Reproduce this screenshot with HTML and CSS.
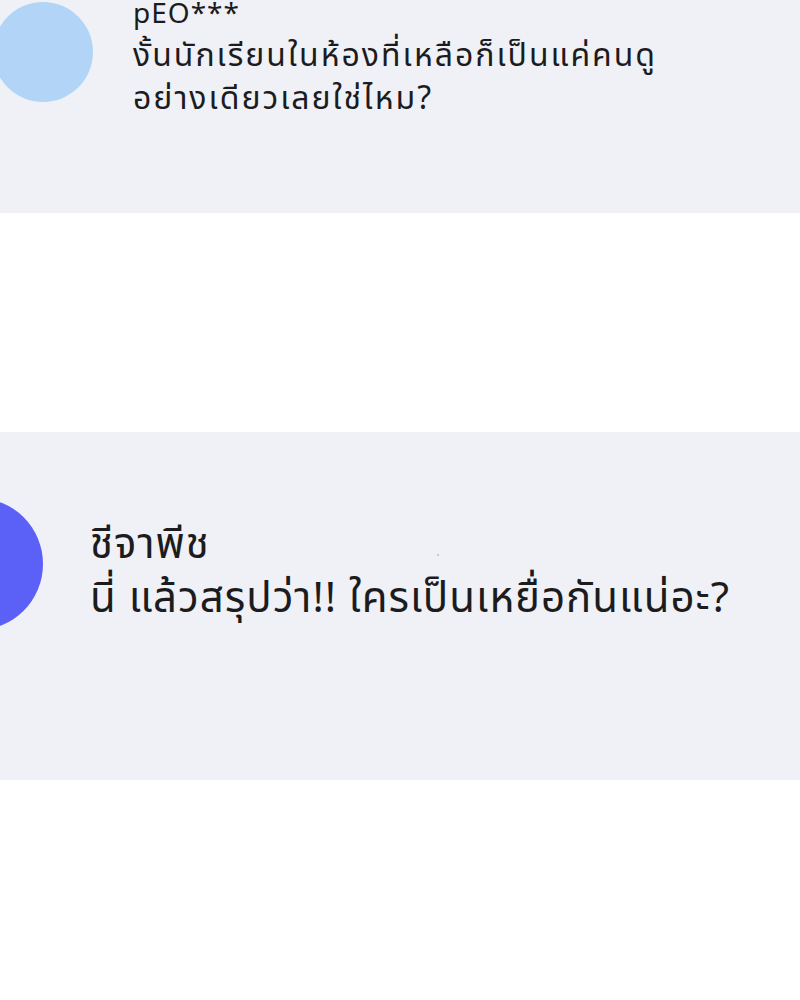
FILE: index.html
```html
<!DOCTYPE html>
<html lang="th">

<head>
    <meta charset="UTF-8">
    <meta name="viewport" content="width=device-width, initial-scale=1.0">
    <title>Comments</title>
    <link rel="stylesheet" href="styles.css">
</head>

<body>

    <div class="comment first">
        <div class="avatar light"></div>
        <div class="bubble">
            <div class="name">pEO***</div>
            <div class="text">งั้นนักเรียนในห้องที่เหลือก็เป็นแค่คนดู<br>อย่างเดียวเลยใช่ไหม?</div>
        </div>
    </div>

    <div class="comment second">
        <div class="avatar dark"></div>
        <div class="bubble">
            <div class="name">ชีจาพีช</div>
            <div class="text">นี่ แล้วสรุปว่า!! ใครเป็นเหยื่อกันแน่อะ?</div>
        </div>
        <span class="speck"></span>
    </div>

</body>

</html>
```

FILE: styles.css
```css
body {
    margin: 0;
    background-color: #ffffff;
    color: #1c1c1e;
    font-family: "Noto Sans Thai", "Noto Sans", sans-serif;
}

.comment {
    display: flex;
    background-color: #f0f1f6;
    position: relative;
}

.avatar {
    flex-shrink: 0;
    border-radius: 50%;
}

/* first comment, cropped at the top */
.first {
    height: 213px;
    align-items: flex-start;
}

.first .avatar {
    width: 100px;
    height: 100px;
    margin: 2px 40px 0 -7px;
}

.first .bubble {
    margin-top: -5px;
    font-size: 32px;
    line-height: 43px;
    letter-spacing: 2px;
}

.first .name {
    font-size: 28px;
    line-height: 40px;
    letter-spacing: 1px;
}

.light {
    background-color: #b2d4f6;
}

/* second comment */
.second {
    margin-top: 219px;
    height: 348px;
    align-items: flex-start;
}

.second .avatar {
    width: 132px;
    height: 132px;
    margin: 66px 47px 0 -89px;
}

.second .bubble {
    margin-top: 86px;
    font-size: 42px;
    line-height: 54px;
    letter-spacing: 1px;
}

.dark {
    background-color: #5b60f6;
}

.speck {
    position: absolute;
    left: 437px;
    top: 122px;
    width: 2px;
    height: 2px;
    border-radius: 50%;
    background-color: #b9bcc6;
}
```
